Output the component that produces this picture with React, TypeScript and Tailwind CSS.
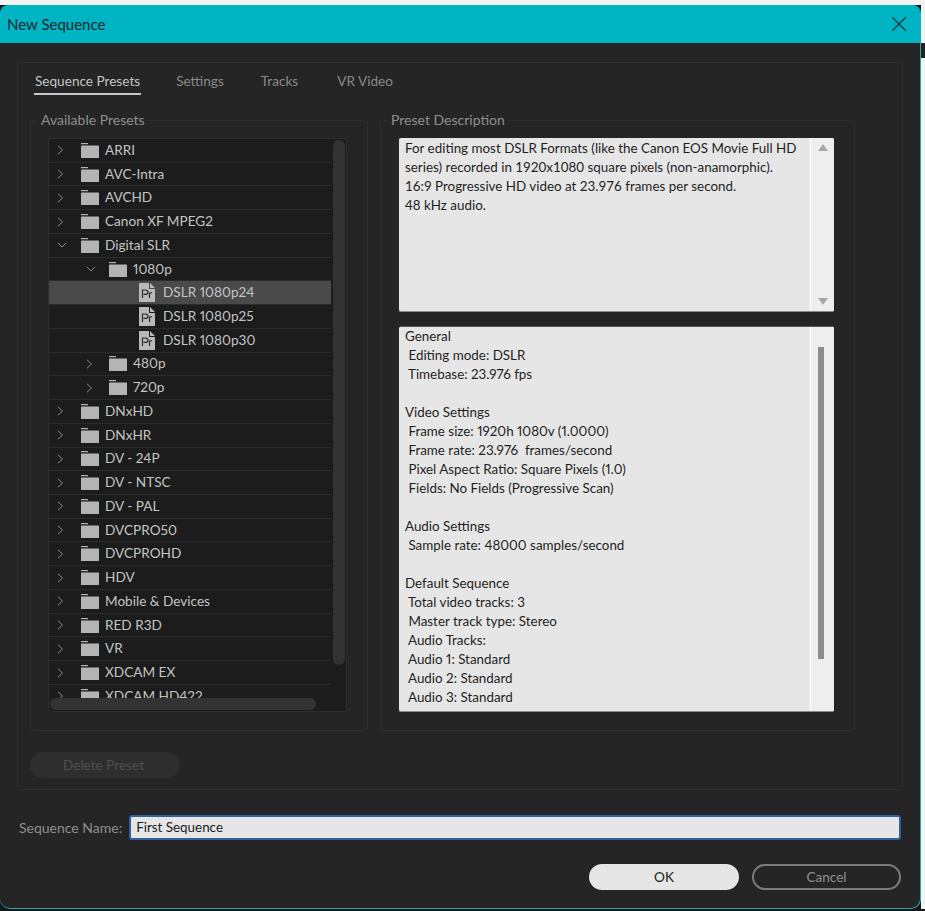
import { X } from 'lucide-react';

type Row = {
  name: string;
  depth: 0 | 1 | 2;
  open?: boolean;
  preset?: boolean;
  selected?: boolean;
};

const rows: Row[] = [
  { name: 'ARRI', depth: 0 },
  { name: 'AVC-Intra', depth: 0 },
  { name: 'AVCHD', depth: 0 },
  { name: 'Canon XF MPEG2', depth: 0 },
  { name: 'Digital SLR', depth: 0, open: true },
  { name: '1080p', depth: 1, open: true },
  { name: 'DSLR 1080p24', depth: 2, preset: true, selected: true },
  { name: 'DSLR 1080p25', depth: 2, preset: true },
  { name: 'DSLR 1080p30', depth: 2, preset: true },
  { name: '480p', depth: 1 },
  { name: '720p', depth: 1 },
  { name: 'DNxHD', depth: 0 },
  { name: 'DNxHR', depth: 0 },
  { name: 'DV - 24P', depth: 0 },
  { name: 'DV - NTSC', depth: 0 },
  { name: 'DV - PAL', depth: 0 },
  { name: 'DVCPRO50', depth: 0 },
  { name: 'DVCPROHD', depth: 0 },
  { name: 'HDV', depth: 0 },
  { name: 'Mobile & Devices', depth: 0 },
  { name: 'RED R3D', depth: 0 },
  { name: 'VR', depth: 0 },
  { name: 'XDCAM EX', depth: 0 },
  { name: 'XDCAM HD422', depth: 0 },
];

const info = [
  'General',
  ' Editing mode: DSLR',
  ' Timebase: 23.976 fps',
  '',
  'Video Settings',
  ' Frame size: 1920h 1080v (1.0000)',
  ' Frame rate: 23.976  frames/second',
  ' Pixel Aspect Ratio: Square Pixels (1.0)',
  ' Fields: No Fields (Progressive Scan)',
  '',
  'Audio Settings',
  ' Sample rate: 48000 samples/second',
  '',
  'Default Sequence',
  ' Total video tracks: 3',
  ' Master track type: Stereo',
  ' Audio Tracks:',
  ' Audio 1: Standard',
  ' Audio 2: Standard',
  ' Audio 3: Standard',
];

function Twisty({ open }: { open?: boolean }) {
  return (
    <svg width="10" height="10" viewBox="0 0 10 10" className="shrink-0" fill="none" stroke="#9a9a9a" strokeWidth="0.9">
      <path d={open ? 'M0.8 2.8L5 7L9.2 2.8' : 'M1 0.8L5.5 5L1 9.2'} />
    </svg>
  );
}

function FolderIcon() {
  return (
    <svg width="18" height="15" viewBox="0 0 18 15" className="shrink-0">
      <rect x="0" y="0" width="7" height="1.2" fill="#b4b4b4" />
      <rect x="0" y="2.5" width="18" height="12.5" rx="0.5" fill="#b4b4b4" />
    </svg>
  );
}

function PresetIcon() {
  return (
    <svg width="16" height="19" viewBox="0 0 16 19" className="shrink-0">
      <path d="M0 0H10V6H16V19H0Z" fill="#b9b9b9" />
      <path d="M11 0L16 5H11Z" fill="#b9b9b9" />
      <path d="M3.5 15V7H6.6C8.2 7 8.9 8 8.9 9.2C8.9 10.5 8 11.4 6.6 11.4H4.6M10.5 15V9.5M10.5 11C11 10 11.8 9.6 12.8 9.7" fill="none" stroke="#2a2a2a" strokeWidth="1.2" />
    </svg>
  );
}

function TreeRow({ row }: { row: Row }) {
  return (
    <div
      className={`flex h-[23.74px] shrink-0 items-center border-b border-[#2b2b2b] ${
        row.selected ? 'bg-[#4a4a4a]' : ''
      } ${row.depth === 0 ? 'pl-[8px]' : row.depth === 1 ? 'pl-[37px]' : 'pl-[90px]'}`}
    >
      {!row.preset && (
        <span className={`flex shrink-0 ${row.depth === 0 ? 'mr-[14px]' : 'mr-[13px]'}`}>
          <Twisty open={row.open} />
        </span>
      )}
      {row.preset ? <PresetIcon /> : <FolderIcon />}
      <span className={`whitespace-pre text-[#c4c4c4] ${row.preset ? 'ml-[8px]' : 'ml-[6px]'}`}>{row.name}</span>
    </div>
  );
}

function Group({ title, className, children }: { title: string; className: string; children: React.ReactNode }) {
  return (
    <fieldset className={`h-[621px] rounded-[3px] border border-[#2e2e2e] ${className}`}>
      <legend className="ml-[7px] h-[20px] px-[3px] text-[14px] leading-[20px] text-[#8f8f8f]">{title}</legend>
      {children}
    </fieldset>
  );
}

export default function App() {
  return (
    <div className="flex h-[911px] w-[925px] flex-col overflow-hidden bg-[#f3f3f3] pt-[5px] font-['Lato',sans-serif] text-[13.6px] leading-[19px] proportional-nums">
      <div className="flex h-[904px] shrink-0">
        <div className="h-full w-[921px] shrink-0 bg-[#15181b]">
          <div className="flex h-full flex-col overflow-hidden rounded-b-[10px] rounded-t-[8px] border-b border-r border-[#2fa6ad] bg-[#252525]">
            <div className="flex h-[38px] shrink-0 items-center justify-between bg-[#00b4c4] pl-[7px] pr-[8px] text-[15px] text-[#10282c]">
              <span>New Sequence</span>
              <X size={26} strokeWidth={1} className="text-[#123338]" />
            </div>

            <div className="mx-[17px] mt-[19px] h-[728px] shrink-0 rounded-[3px] border border-[#2e2e2e] px-[12px]">
              <div className="flex h-[32px] items-end gap-[37px] pl-[4px]">
                <span className="mr-[-2px] border-b-2 border-[#c8c8c8] px-px pb-[2px] text-[#c4c4c4]">Sequence Presets</span>
                <span className="pb-[4px] text-[#8a8a8a]">Settings</span>
                <span className="mr-[2px] pb-[4px] text-[#8a8a8a]">Tracks</span>
                <span className="pb-[4px] text-[#8a8a8a]">VR Video</span>
              </div>

              <div className="mt-[15px] flex gap-[12px]">
                <Group title="Available Presets" className="w-[338px]">
                  <div className="relative mx-[17px] mt-[8px] h-[574px] w-[299px] overflow-hidden rounded-[2px] border border-[#2e2e2e] bg-[#1c1c1c]">
                    <div className="flex w-[282px] flex-col">
                      {rows.map((r) => (
                        <TreeRow key={r.name} row={r} />
                      ))}
                    </div>
                    <div className="absolute right-[1px] top-[1px] h-[525px] w-[12px] rounded-full bg-[#333333]" />
                    <div className="absolute bottom-0 left-0 h-[13px] w-full bg-[#1c1c1c]" />
                    <div className="absolute bottom-[1px] left-[1px] h-[12px] w-[266px] rounded-full bg-[#333333]" />
                  </div>
                </Group>

                <Group title="Preset Description" className="w-[475px]">
                  <div className="mx-[18px] mt-[8px] flex h-[174px] w-[435px] overflow-hidden rounded-[2px] border-b border-[#8a8a8a] bg-[#e6e6e6] text-[#1f1f1f]">
                    <div className="flex-1 py-[1px] pl-[6px] pr-[6px] text-[13.4px] normal-nums">
                      For editing most DSLR Formats (like the Canon EOS Movie Full HD series) recorded in 1920x1080 square pixels (non-anamorphic).
                      <br />
                      16:9 Progressive HD video at 23.976 frames per second.
                      <br />
                      48 kHz audio.
                    </div>
                    <div className="flex w-[24px] shrink-0 flex-col items-center justify-between border-l border-white bg-[#eeeeee] py-[6px]">
                      <div className="h-0 w-0 border-x-[5px] border-b-[7px] border-x-transparent border-b-[#a8a8a8]" />
                      <div className="h-0 w-0 border-x-[5px] border-t-[7px] border-x-transparent border-t-[#a8a8a8]" />
                    </div>
                  </div>

                  <div className="mx-[18px] mt-[14px] flex h-[386px] w-[435px] overflow-hidden rounded-[2px] border-y border-t-[#555555] border-b-[#8a8a8a] bg-[#e6e6e6] text-[#1f1f1f]">
                    <div className="flex-1 pl-[6px] text-[13.4px]">
                      {info.map((line, i) => (
                        <div key={i} className="h-[19px] whitespace-pre">
                          {line}
                        </div>
                      ))}
                    </div>
                    <div className="w-[24px] shrink-0 border-l border-white bg-[#eeeeee] pl-[7px] pt-[20px]">
                      <div className="h-[312px] w-[6px] bg-[#8c8c8c]" />
                    </div>
                  </div>
                </Group>
              </div>

              <button className="mt-[21px] h-[26px] w-[150px] rounded-full bg-[#2e2e2e] pr-[3px] text-[#505050]">Delete Preset</button>
            </div>

            <div className="mx-[19px] mt-[25px] flex h-[25px] shrink-0 items-center gap-[7px]">
              <span className="text-[14px] text-[#8f8f8f]">Sequence Name:</span>
              <div className="flex h-[25px] flex-1 items-center rounded-[3px] border-2 border-[#2f5f9f] bg-[#e6e6e6] px-[5px] text-[13.4px] text-[#1a1a1a]">
                First Sequence
              </div>
            </div>

            <div className="mr-[19px] mt-[24px] flex justify-end gap-[13px]">
              <button className="h-[26px] w-[150px] rounded-full bg-[#e6e6e6] text-[#222222]">OK</button>
              <button className="h-[26px] w-[149px] rounded-full border-2 border-[#7a7a7a] text-[#8f8f8f]">Cancel</button>
            </div>
          </div>
        </div>
        <div className="flex-1">
          <div className="mt-[38px] h-[15px] bg-[#222222]" />
        </div>
      </div>
      <div className="h-[2px] shrink-0 bg-[#15181b]" />
    </div>
  );
}
